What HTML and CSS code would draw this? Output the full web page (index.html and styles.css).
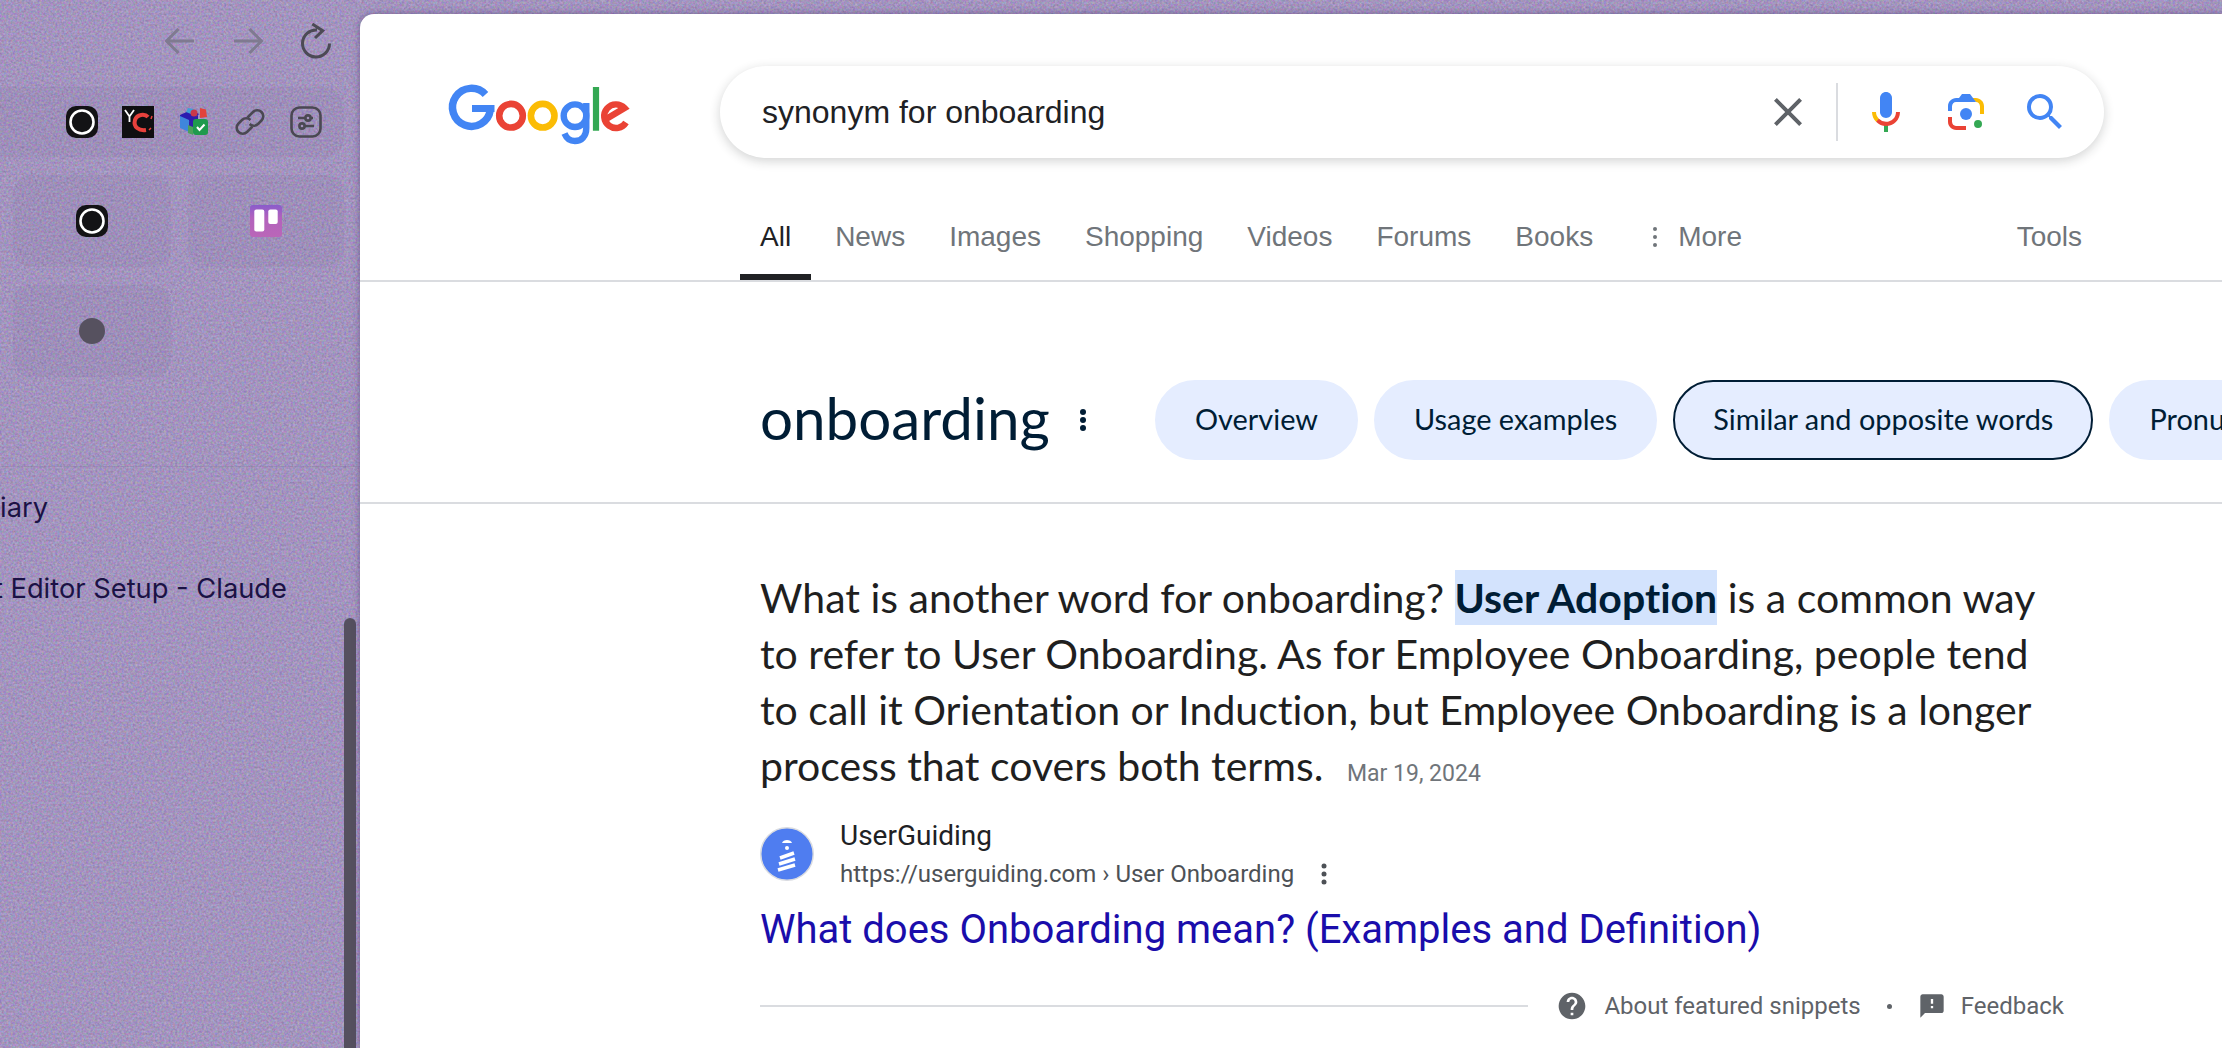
FILE: index.html
```html
<!DOCTYPE html>
<html lang="en">
<head>
    <meta charset="UTF-8">
    <meta name="viewport" content="width=device-width, initial-scale=1.0">
    <title>synonym for onboarding - Google Search</title>
    <link rel="stylesheet" href="styles.css">
</head>
<body>
    <svg class="noise" aria-hidden="true">
        <filter id="grain" color-interpolation-filters="sRGB">
            <feTurbulence type="fractalNoise" baseFrequency="0.45" numOctaves="2" seed="4"/>
            <feColorMatrix type="matrix" values="1 0 0 0 0.100  0 1 0 0 0  0 0 1 0 0.200  0 0 0 0 0.300"/>
        </filter>
        <rect width="100%" height="100%" filter="url(#grain)"/>
    </svg>

    <aside class="sidebar">
        <div class="browser-nav">
            <svg class="nav-icon faded" viewBox="0 0 36 36"><path d="M32 18H5M16.500 6 4.500 18l12 12"/></svg>
            <svg class="nav-icon faded" viewBox="0 0 36 36"><path d="M4 18h27M19.500 6l12 12-12 12"/></svg>
            <svg class="nav-icon" viewBox="0 0 36 36"><path d="M19 7a13.500 13.500 0 1 0 12.500 13.500M14.300 1l10.400 6.700L17 15"/></svg>
        </div>

        <div class="toolbar">
            <svg class="app-icon" viewBox="0 0 32 32"><rect width="32" height="32" rx="10" fill="#131315"/><circle cx="16" cy="16" r="11.500" fill="none" stroke="#fff" stroke-width="2.600"/></svg>
            <svg class="app-icon" viewBox="0 0 32 32">
                <rect width="32" height="32" fill="#0f0f11"/>
                <path d="M3 4l4.500 6.500L12 4M7.500 10v6" fill="none" stroke="#fff" stroke-width="1.800"/>
                <path d="M26 11c-3-3.500-11-3-13 3-2 7 4 11 11 10" fill="none" stroke="#e8413c" stroke-width="4"/>
                <path d="M29 13l1-3M27 24l2-2" stroke="#e8413c" stroke-width="1.500"/>
            </svg>
            <svg class="app-icon" viewBox="0 0 32 32">
                <path d="M2 9 13 4l8 4-7 7-3 1-9-3z" fill="#2a1bb0"/>
                <path d="M2 10l9 4v12l-9-4z" fill="#3f86dc"/>
                <path d="M11 16l9-7v9l-9 8z" fill="#2f1fa8"/>
                <path d="M10 2l6 1-3 5-5-2z" fill="#3f9fd8"/>
                <circle cx="16" cy="7" r="3.500" fill="#c8384a"/>
                <path d="M22 2l6 1.500 1 7.500-7 1z" fill="#e2433b"/>
                <path d="M10 19l5 2v8l-5-2z" fill="#4ca05a"/>
                <rect x="15" y="13" width="15" height="16" rx="3" fill="#1f9a4d"/>
                <path d="M19 21l2.500 3 5-5.500" fill="none" stroke="#fff" stroke-width="2"/>
            </svg>
            <svg class="app-icon line-icon" viewBox="0 0 32 32">
                <path d="M13.500 11.500 19 6a6 6 0 0 1 8.500 8.500L24 18a6 6 0 0 1-8.500 0"/>
                <path d="M18.500 20.500 13 26a6 6 0 0 1-8.500-8.500L8 14a6 6 0 0 1 8.500 0"/>
            </svg>
            <svg class="app-icon line-icon" viewBox="0 0 32 32">
                <rect x="1.500" y="1.500" width="29" height="29" rx="8"/>
                <path d="M8 12h15M9 20h15"/>
                <circle cx="18" cy="12" r="2.600" fill="#a393bd"/>
                <circle cx="12" cy="20" r="2.600" fill="#a393bd"/>
            </svg>
        </div>

        <div class="tiles">
            <div class="tile">
                <svg class="app-icon" viewBox="0 0 32 32"><rect width="32" height="32" rx="10" fill="#131315"/><circle cx="16" cy="16" r="11.500" fill="none" stroke="#fff" stroke-width="2.600"/></svg>
            </div>
            <div class="tile">
                <svg class="app-icon" viewBox="0 0 32 32">
                    <linearGradient id="board" x1="0" y1="0" x2="0" y2="1">
                        <stop offset="0" stop-color="#8a5ccb"/>
                        <stop offset="0.4" stop-color="#b262bd"/>
                        <stop offset="1" stop-color="#ba66b8"/>
                    </linearGradient>
                    <rect width="32" height="32" rx="3" fill="url(#board)"/>
                    <rect x="4.300" y="4.500" width="10" height="22" rx="2" fill="#fff"/>
                    <rect x="18.300" y="4.500" width="9.400" height="14.500" rx="2" fill="#fff"/>
                </svg>
            </div>
            <div class="tile"><span class="dot-app"></span></div>
        </div>

        <ul class="tab-list">
            <li>iary</li>
            <li class="long">t Editor Setup - Claude</li>
        </ul>
        <div class="scroll-thumb"></div>
    </aside>

    <main class="page">
        <header class="search-head">
            <svg class="logo" viewBox="0 0 190 70" role="img" aria-label="Google">
                <g fill="none">
                    <path d="M40.500 15.500A19 19 0 1 0 45.300 31" stroke="#4285f4" stroke-width="7.500"/>
                    <path d="M27 29.500h22.500" stroke="#4285f4" stroke-width="7"/>
                    <circle cx="66" cy="36.700" r="11.800" stroke="#ea4335" stroke-width="6.600"/>
                    <circle cx="97.700" cy="36.700" r="11.800" stroke="#fbbc05" stroke-width="6.600"/>
                    <circle cx="130" cy="36.700" r="11.300" stroke="#4285f4" stroke-width="6.400"/>
                    <path d="M141.300 24v25c0 8.500-5 13-11.500 13-5 0-8.500-3.200-10.300-7.500" stroke="#4285f4" stroke-width="6.400"/>
                    <path d="M151 8v43.700" stroke="#34a853" stroke-width="6.200"/>
                    <path d="M181 43.500A11.800 11.800 0 1 1 179.500 29L162 39.500" stroke="#ea4335" stroke-width="6.400"/>
                </g>
            </svg>
            <div class="search-box">
                <span class="query">synonym for onboarding</span>
                <svg class="box-icon" viewBox="0 0 24 24"><path fill="#5f6368" d="M19 6.410 17.590 5 12 10.590 6.410 5 5 6.410 10.590 12 5 17.590 6.410 19 12 13.410 17.590 19 19 17.590 13.410 12z"/></svg>
                <span class="box-divider"></span>
                <svg class="box-icon" viewBox="0 0 24 24">
                    <path fill="#4285f4" d="m12 15c1.660 0 3-1.310 3-2.970v-7.020c0-1.660-1.340-3.010-3-3.010s-3 1.340-3 3.010v7.020c0 1.660 1.340 2.970 3 2.970z"/>
                    <path fill="#34a853" d="m11 18.080h2v3.920h-2z"/>
                    <path fill="#fbbc04" d="m7.050 16.870c-1.270-1.330-2.050-2.830-2.050-4.870h2c0 1.450 0.560 2.420 1.470 3.380v0.320l-1.150 1.180z"/>
                    <path fill="#ea4335" d="m12 16.930a4.970 5.250 0 0 1 -3.540 -1.550l-1.410 1.490c1.260 1.340 3.020 2.130 4.950 2.130 3.870 0 6.990-2.920 6.990-6.990h-1.990c0 2.920-2.240 4.920-5 4.920z"/>
                </svg>
                <svg class="box-icon lens" viewBox="0 0 192 192">
                    <circle fill="#34a853" cx="144.070" cy="144" r="16"/>
                    <circle fill="#4285f4" cx="96.070" cy="104" r="24"/>
                    <path fill="#ea4335" d="M24 135.200c0 18.110 14.690 32.800 32.800 32.800H96v-16l-40.100-.1c-8.800 0-15.900-8.190-15.900-17.900v-18H24v19.200z"/>
                    <path fill="#fbbc04" d="M168 72.800c0-18.110-14.690-32.800-32.800-32.800H116l20 16c8.800 0 16 8.290 16 18v30h16V72.800z"/>
                    <path fill="#4285f4" d="M112 24H80L68 40H56.800C38.690 40 24 54.690 24 72.800V92h16V74c0-9.710 7.200-18 16-18h80L112 24z"/>
                </svg>
                <svg class="box-icon" viewBox="0 0 24 24"><path fill="#4285f4" d="M15.500 14h-.79l-.28-.27A6.471 6.471 0 0 0 16 9.500 6.500 6.500 0 1 0 9.500 16c1.610 0 3.090-.59 4.230-1.570l.27.28v.79l5 4.990L20.490 19l-4.990-5zm-6 0C7.010 14 5 11.990 5 9.500S7.010 5 9.500 5 14 7.010 14 9.500 11.990 14 9.500 14z"/></svg>
            </div>
        </header>

        <nav class="tabs">
            <a class="tab active">All</a>
            <a class="tab">News</a>
            <a class="tab">Images</a>
            <a class="tab">Shopping</a>
            <a class="tab">Videos</a>
            <a class="tab">Forums</a>
            <a class="tab">Books</a>
            <a class="tab more">
                <svg class="tab-dots" viewBox="0 0 6 22"><circle cx="3" cy="3" r="2"/><circle cx="3" cy="11" r="2"/><circle cx="3" cy="19" r="2"/></svg>
                More
            </a>
            <a class="tab tools">Tools</a>
        </nav>

        <section class="word-row">
            <h1 class="word">onboarding</h1>
            <svg class="word-dots" viewBox="0 0 8 24"><circle cx="4" cy="4" r="3"/><circle cx="4" cy="12" r="3"/><circle cx="4" cy="20" r="3"/></svg>
            <div class="chips">
                <a class="chip">Overview</a>
                <a class="chip">Usage examples</a>
                <a class="chip selected">Similar and opposite words</a>
                <a class="chip">Pronunciation</a>
            </div>
        </section>

        <section class="snippet">
            <p class="answer">What is another word for onboarding? <mark>User Adoption</mark> is a common way to refer to User Onboarding. As for Employee Onboarding, people tend to call it Orientation or Induction, but Employee Onboarding is a longer process that covers both terms. <span class="date">Mar 19, 2024</span></p>

            <div class="source">
                <svg class="favicon" viewBox="0 0 54 54">
                    <circle cx="27" cy="27" r="26.250" fill="#4f7df0" stroke="#dadce0" stroke-width="1.500"/>
                    <path d="M22 16c1-4 9-4 10 0z" fill="#fff"/>
                    <circle cx="27" cy="21" r="2" fill="#fff"/>
                    <path d="M20 31l14-5M19 37l16-5M18 43l17-5" stroke="#fff" stroke-width="3.500" fill="none"/>
                </svg>
                <div class="source-text">
                    <div class="site-name">UserGuiding</div>
                    <div class="site-url">https://userguiding.com › User Onboarding
                        <svg class="url-dots" viewBox="0 0 6 22"><circle cx="3" cy="3" r="2.500"/><circle cx="3" cy="11" r="2.500"/><circle cx="3" cy="19" r="2.500"/></svg>
                    </div>
                </div>
            </div>

            <a class="result-title">What does Onboarding mean? (Examples and Definition)</a>

            <div class="snippet-foot">
                <span class="foot-line"></span>
                <svg class="help-icon" viewBox="0 0 24 24"><path d="M12 2C6.480 2 2 6.480 2 12s4.480 10 10 10 10-4.480 10-10S17.520 2 12 2zm1 17h-2v-2h2v2zm2.070-7.750l-.9.920C13.450 12.900 13 13.500 13 15h-2v-.5c0-1.100.450-2.100 1.170-2.830l1.240-1.260c.370-.360.590-.860.590-1.410 0-1.100-.9-2-2-2s-2 .9-2 2H8c0-2.210 1.790-4 4-4s4 1.790 4 4c0 .880-.360 1.680-.930 2.250z"/></svg>
                <span>About featured snippets</span>
                <span class="foot-dot"></span>
                <svg class="feedback-icon" viewBox="0 0 24 24"><path d="M20 2H4c-1.100 0-1.990.9-1.990 2L2 22l4-4h14c1.100 0 2-.9 2-2V4c0-1.100-.9-2-2-2zm-7 12h-2v-2h2v2zm0-4h-2V6h2v4z"/></svg>
                <span>Feedback</span>
            </div>
        </section>
    </main>
</body>
</html>
```

FILE: styles.css
```css
html, body {
    margin: 0;
    height: 100%;
    overflow: hidden;
}
body {
    display: flex;
    background-color: #a79dc3;
    font-family: Roboto, "Liberation Sans", sans-serif;
    position: relative;
}
.noise {
    position: absolute;
    left: 0;
    top: 0;
    width: 100%;
    height: 100%;
}

/* left browser sidebar */
.sidebar {
    width: 360px;
    flex: none;
    position: relative;
}
.browser-nav {
    height: 82px;
    padding: 0 26px 5px 0;
    display: flex;
    justify-content: flex-end;
    align-items: center;
    gap: 32px;
}
.nav-icon {
    width: 36px;
    height: 36px;
    fill: none;
    stroke: #4c4a55;
    stroke-width: 3;
}
.nav-icon.faded {
    stroke: #7f7a90;
}
.toolbar {
    width: 344px;
    height: 70px;
    box-sizing: border-box;
    padding-right: 22px;
    background-color: rgba(85, 65, 115, 0.06);
    border-radius: 0 20px 20px 0;
    display: flex;
    justify-content: flex-end;
    align-items: center;
    gap: 24px;
}
.app-icon {
    width: 32px;
    height: 32px;
    flex: none;
}
.line-icon {
    fill: none;
    stroke: #4a4852;
    stroke-width: 2.600;
}
.tiles {
    margin: 18px 0 0 13px;
    width: 331px;
    display: grid;
    grid-template-columns: 158px 156px;
    grid-auto-rows: 92px;
    gap: 18px 17px;
}
.tile {
    background-color: rgba(85, 65, 115, 0.06);
    border-radius: 18px;
    display: flex;
    align-items: center;
    justify-content: center;
}
.dot-app {
    width: 26px;
    height: 26px;
    border-radius: 50%;
    background-color: #56515f;
}
.tab-list {
    list-style: none;
    margin: 89px 0 0;
    padding: 0;
    border-top: 1px solid rgba(85, 65, 115, 0.12);
    font-family: Inter, sans-serif;
    font-size: 27.300px;
    color: #1b1245;
}
.tab-list li {
    height: 81px;
    box-sizing: border-box;
    padding: 0 312px 1px 0;
    display: flex;
    justify-content: flex-end;
    align-items: center;
    white-space: nowrap;
    overflow: hidden;
}
.tab-list li.long {
    padding-right: 73px;
}
.scroll-thumb {
    position: absolute;
    left: 344px;
    top: 618px;
    width: 12px;
    height: 440px;
    border-radius: 6px;
    background-color: #55505f;
}

/* main google page */
.page {
    flex: 1;
    min-width: 0;
    margin-top: 14px;
    background-color: #fff;
    border-top-left-radius: 14px;
    box-shadow: 0 0 7px rgba(70, 50, 110, 0.55);
    position: relative;
    overflow: hidden;
}
.search-head {
    display: flex;
    align-items: center;
    padding: 52px 0 0 85px;
    gap: 85px;
}
.logo {
    width: 190px;
    height: 70px;
    margin-top: 4px;
    flex: none;
}
.search-box {
    width: 1384px;
    height: 92px;
    flex: none;
    box-sizing: border-box;
    padding: 0 35px 0 42px;
    border-radius: 46px;
    background-color: #fff;
    box-shadow: 0 3px 11px rgba(32, 33, 36, 0.2);
    display: flex;
    align-items: center;
}
.query {
    flex: 1;
    font-family: "Liberation Sans", Arial, sans-serif;
    font-size: 32px;
    color: #202124;
}
.box-icon {
    width: 48px;
    height: 48px;
    flex: none;
}
.box-divider {
    width: 2px;
    height: 58px;
    margin: 0 24px;
    background-color: #dadce0;
}
.lens {
    margin: 0 31px 0 32px;
}
.tabs {
    margin-top: 42px;
    padding: 0 120px 0 380px;
    display: flex;
    gap: 4px;
    border-bottom: 2px solid #dadce0;
    font-family: "Liberation Sans", Arial, sans-serif;
    font-size: 28px;
    color: #70757a;
}
.tab {
    padding: 20px 20px;
    line-height: 34px;
    border-bottom: 6px solid transparent;
    display: flex;
    align-items: center;
}
.tab.active {
    color: #202124;
    border-bottom-color: #202124;
}
.tab-dots {
    width: 6px;
    height: 22px;
    margin: 0 20px 0 15px;
    fill: #70757a;
}
.tools {
    margin-left: auto;
}
.word-row {
    height: 165px;
    padding: 55px 0 0 400px;
    display: flex;
    align-items: center;
    border-bottom: 2px solid #dadce0;
    font-family: Lato, sans-serif;
    white-space: nowrap;
}
.word {
    margin: 0 0 5px;
    width: 290px;
    flex: none;
    font-size: 58.300px;
    font-weight: 400;
    color: #001d35;
    font-variant-ligatures: none;
}
.word-dots {
    width: 8px;
    height: 24px;
    margin: 0 68px 0 29px;
    fill: #001d35;
    flex: none;
}
.chips {
    display: flex;
    gap: 16px;
    flex: none;
}
.chip {
    height: 80px;
    box-sizing: border-box;
    padding: 0 38px 3px;
    border-radius: 40px;
    background-color: #e5edff;
    border: 2px solid #e5edff;
    color: #001d35;
    font-size: 28.900px;
    display: flex;
    align-items: center;
    flex: none;
}
.chip.selected {
    border-color: #001d35;
}
.snippet {
    padding: 66px 0 0 400px;
}
.answer {
    margin: 0;
    width: 1300px;
    font-family: Lato, sans-serif;
    font-size: 41px;
    line-height: 56px;
    color: #1f1f1f;
    font-variant-ligatures: none;
}
.answer mark {
    background-color: #d3e3fd;
    color: #001d35;
    font-weight: 700;
    padding: 3px 0;
}
.date {
    margin-left: 13px;
    font-family: Roboto, sans-serif;
    font-size: 23px;
    color: #70757a;
}
.source {
    display: flex;
    align-items: flex-start;
    gap: 26px;
    margin-top: 18px;
}
.favicon {
    width: 54px;
    height: 54px;
    margin-top: 7px;
    flex: none;
}
.site-name {
    font-size: 28px;
    line-height: 32px;
    color: #202124;
}
.site-url {
    margin-top: 6px;
    font-size: 24px;
    line-height: 32px;
    color: #4d5156;
    display: flex;
    align-items: center;
    gap: 27px;
}
.url-dots {
    width: 6px;
    height: 22px;
    fill: #4d5156;
}
.result-title {
    display: block;
    margin-top: 14px;
    font-size: 40px;
    line-height: 52px;
    color: #1a0dab;
}
.snippet-foot {
    width: 1304px;
    height: 30px;
    margin-top: 35px;
    display: flex;
    align-items: center;
    font-size: 24px;
    color: #5f6368;
}
.foot-line {
    flex: 1;
    height: 2px;
    background-color: #dadce0;
}
.help-icon {
    width: 32px;
    height: 32px;
    margin: 0 16px 0 28px;
    fill: #5f6368;
}
.foot-dot {
    width: 5px;
    height: 5px;
    margin: 0 26px;
    border-radius: 50%;
    background-color: #5f6368;
}
.feedback-icon {
    width: 28px;
    height: 28px;
    margin-right: 15px;
    fill: #5f6368;
}
```
